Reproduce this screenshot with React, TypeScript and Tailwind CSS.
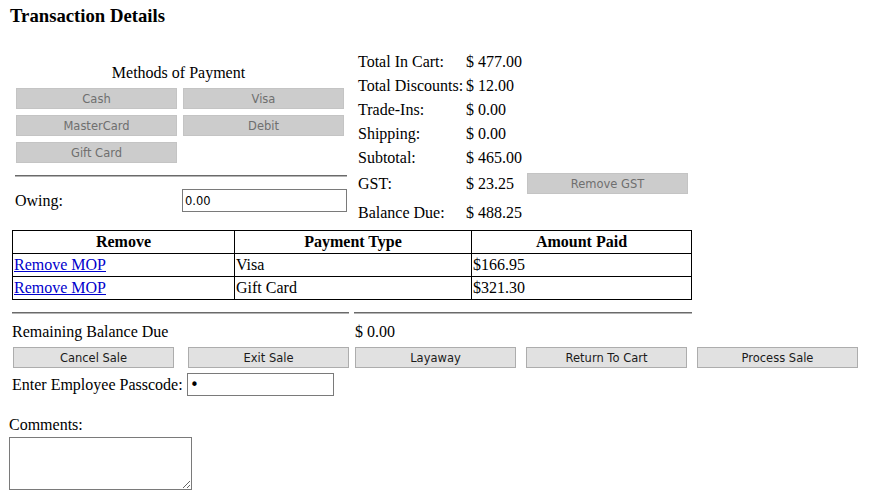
const sans = "font-['DejaVu_Sans',sans-serif] text-[11.5px]"

function GreyButton({ label, className = '' }: { label: string; className?: string }) {
  return (
    <button
      disabled
      className={`h-[21px] w-[161px] shrink-0 border border-[#c4c4c4] bg-[#cccccc] pt-[2px] text-[#6f6f6f] leading-[17px] ${sans} ${className}`}
    >
      {label}
    </button>
  )
}

function ActionButton({ label, className = '' }: { label: string; className?: string }) {
  return (
    <button
      className={`h-[21px] w-[161px] shrink-0 border border-[#adadad] bg-[#e1e1e1] pt-[2px] text-[#1b1b1b] leading-[17px] ${sans} ${className}`}
    >
      {label}
    </button>
  )
}

const totals: [string, string][] = [
  ['Total In Cart:', '$ 477.00'],
  ['Total Discounts:', '$ 12.00'],
  ['Trade-Ins:', '$ 0.00'],
  ['Shipping:', '$ 0.00'],
  ['Subtotal:', '$ 465.00'],
]

const payments = [
  { type: 'Visa', amount: '$166.95' },
  { type: 'Gift Card', amount: '$321.30' },
]

function Rule({ className = '' }: { className?: string }) {
  return <div className={`h-[2px] border-t border-b border-t-[#6a6a6a] border-b-[#b4b4b4] ${className}`} />
}

export default function App() {
  return (
    <div className="h-[501px] w-[870px] overflow-hidden bg-white font-['Liberation_Serif',serif] text-[16px] leading-[18px] text-black">
      <h1 className="h-[50px] pl-[10px] pt-[5px] text-[18.72px] font-bold leading-[21.5px]">Transaction Details</h1>

      <div className="flex h-[180px]">
        {/* methods of payment */}
        <div className="ml-[10px] w-[337px]">
          <div className="mt-[14px] text-center">Methods of Payment</div>
          <div className="mt-[6px] grid grid-cols-[161px_161px] gap-[6px] pl-[6px]">
            <GreyButton label="Cash" />
            <GreyButton label="Visa" />
            <GreyButton label="MasterCard" />
            <GreyButton label="Debit" />
            <GreyButton label="Gift Card" />
          </div>
          <Rule className="ml-[5px] mt-[12px] w-[332px]" />
          <div className="mt-[12px] flex items-center">
            <span className="w-[172px] pl-[5px]">Owing:</span>
            <input
              defaultValue="0.00"
              className={`h-[23px] w-[165px] border border-[#7a7a7a] px-[2px] text-black outline-none ${sans}`}
            />
          </div>
        </div>

        {/* totals */}
        <div className="ml-[11px]">
          {totals.map(([label, value]) => (
            <div key={label} className="flex h-[24px] items-center">
              <span className="w-[108px]">{label}</span>
              <span>{value}</span>
            </div>
          ))}
          <div className="flex h-[27px] items-center">
            <span className="w-[108px]">GST:</span>
            <span className="w-[61px]">$ 23.25</span>
            <GreyButton label="Remove GST" />
          </div>
          <div className="flex h-[31px] items-center">
            <span className="w-[108px]">Balance Due:</span>
            <span>$ 488.25</span>
          </div>
        </div>
      </div>

      <table className="ml-[12px] w-[680px] border-collapse border border-black">
        <thead>
          <tr className="h-[23px]">
            <th className="w-[222px] border border-black p-0 font-bold">Remove</th>
            <th className="w-[237px] border border-black p-0 font-bold">Payment Type</th>
            <th className="border border-black p-0 font-bold">Amount Paid</th>
          </tr>
        </thead>
        <tbody>
          {payments.map((p) => (
            <tr key={p.type} className="h-[23px]">
              <td className="border border-black px-[1px] py-0">
                <a href="#" className="text-[#0000cc] underline">Remove MOP</a>
              </td>
              <td className="border border-black px-[1px] py-0">{p.type}</td>
              <td className="border border-black px-[1px] py-0">{p.amount}</td>
            </tr>
          ))}
        </tbody>
      </table>

      <div className="ml-[12px] mt-[12px] flex gap-[5px]">
        <Rule className="w-[337px]" />
        <Rule className="w-[338px]" />
      </div>

      <div className="mt-[9px] flex">
        <span className="ml-[12px] w-[343px]">Remaining Balance Due</span>
        <span>$ 0.00</span>
      </div>

      <div className="mt-[6px] flex">
        <ActionButton label="Cancel Sale" className="ml-[13px]" />
        <ActionButton label="Exit Sale" className="ml-[14px]" />
        <ActionButton label="Layaway" className="ml-[6px]" />
        <ActionButton label="Return To Cart" className="ml-[10px]" />
        <ActionButton label="Process Sale" className="ml-[10px]" />
      </div>

      <div className="mt-[5px] flex items-center">
        <span className="w-[187px] shrink-0 whitespace-nowrap pl-[12px]">Enter Employee Passcode:</span>
        <input
          type="password"
          defaultValue="1"
          className="h-[23px] w-[147px] border border-[#7a7a7a] px-[2px] font-['DejaVu_Sans',sans-serif] text-[15px] text-black outline-none"
        />
      </div>

      <div className="ml-[9px] mt-[20px]">Comments:</div>
      <textarea className="ml-[9px] mt-[3px] block h-[53px] w-[183px] border border-[#7a7a7a] outline-none" />
    </div>
  )
}
